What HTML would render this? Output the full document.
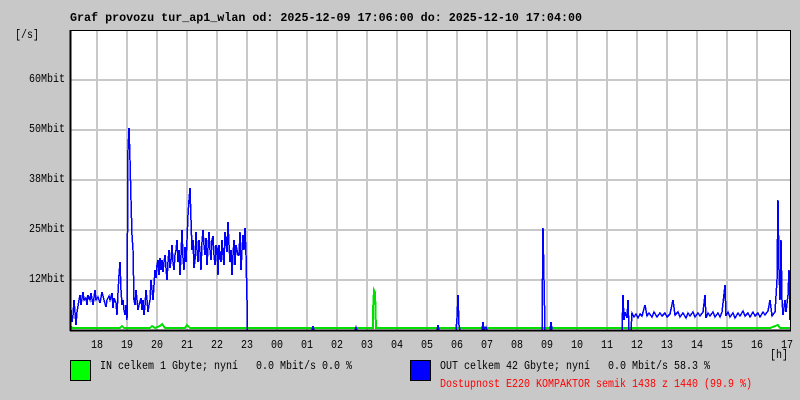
<!DOCTYPE html>
<html><head><meta charset="utf-8"><style>
html,body{margin:0;padding:0;background:#c8c8c8;}
body{width:800px;height:400px;position:relative;overflow:hidden;font-family:"Liberation Mono",monospace;font-size:10px;color:#000;}
.t{position:absolute;white-space:pre;line-height:12px;transform:scaleY(1.2);transform-origin:0 50%;}
.x{position:absolute;top:341px;width:20px;text-align:center;line-height:12px;transform:scaleY(1.2);}
</style></head><body>
<svg width="800" height="400" style="position:absolute;left:0;top:0" shape-rendering="crispEdges">
<rect x="70" y="30" width="720" height="300" fill="#fff"/>
<g stroke="#c8c8c8" stroke-width="2">
<line x1="97" y1="30" x2="97" y2="330"/><line x1="127" y1="30" x2="127" y2="330"/><line x1="157" y1="30" x2="157" y2="330"/><line x1="187" y1="30" x2="187" y2="330"/><line x1="217" y1="30" x2="217" y2="330"/><line x1="247" y1="30" x2="247" y2="330"/><line x1="277" y1="30" x2="277" y2="330"/><line x1="307" y1="30" x2="307" y2="330"/><line x1="337" y1="30" x2="337" y2="330"/><line x1="367" y1="30" x2="367" y2="330"/><line x1="397" y1="30" x2="397" y2="330"/><line x1="427" y1="30" x2="427" y2="330"/><line x1="457" y1="30" x2="457" y2="330"/><line x1="487" y1="30" x2="487" y2="330"/><line x1="517" y1="30" x2="517" y2="330"/><line x1="547" y1="30" x2="547" y2="330"/><line x1="577" y1="30" x2="577" y2="330"/><line x1="607" y1="30" x2="607" y2="330"/><line x1="637" y1="30" x2="637" y2="330"/><line x1="667" y1="30" x2="667" y2="330"/><line x1="697" y1="30" x2="697" y2="330"/><line x1="727" y1="30" x2="727" y2="330"/><line x1="757" y1="30" x2="757" y2="330"/>
<line x1="70" y1="80" x2="790" y2="80"/><line x1="70" y1="130" x2="790" y2="130"/><line x1="70" y1="180" x2="790" y2="180"/><line x1="70" y1="230" x2="790" y2="230"/><line x1="70" y1="280" x2="790" y2="280"/>
</g>
<polyline fill="none" stroke="#00e000" stroke-width="2" points="70,325 72,328 120,328 122,326 124,328 150,328 152,326 155,328 160,326 162,324 165,328 185,328 187,325 190,328 247,328 373,328 373,310 374,290 375,292 376,328 500,328 560,328 700,328 770,328 778,325 780,328 790,328"/>
<polyline fill="none" stroke="#0000ff" stroke-width="1.5" points="70,318 71,310 72,322 73,315 74,300 76,325 77,312 79,300 80,295 81,305 83,292 84,300 86,298 87,305 88,295 90,300 91,293 93,305 95,290 96,300 98,297 100,303 102,292 104,300 106,307 107,300 109,296 110,300 112,293 113,308 114,298 116,303 117,315 118,293 119,275 120,262 121,290 122,305 123,300 124,310 125,315 126,305 127,320 128,150 129,128 130,160 131,200 132,235 133,250 134,300 135,305 136,290 137,300 138,310 139,305 141,298 142,310 143,300 144,315 145,305 146,290 147,300 148,312 149,305 150,300 151,280 152,290 153,300 154,285 155,270 156,278 157,265 158,260 159,275 160,258 161,270 162,260 163,272 164,262 165,255 166,268 167,280 168,262 169,250 170,268 171,260 172,245 173,262 174,270 175,255 176,250 177,240 178,262 179,250 180,275 181,255 182,230 183,258 184,270 185,247 186,262 187,240 188,215 189,200 190,188 191,220 192,250 193,240 194,268 195,260 196,232 197,250 198,262 199,240 200,252 201,270 202,242 203,230 204,245 205,255 206,238 207,265 208,248 209,232 210,250 211,260 212,240 213,236 214,255 215,265 216,245 217,248 218,275 219,245 220,258 221,262 222,240 223,255 224,265 225,232 226,240 227,252 228,222 229,245 230,262 231,250 232,275 233,255 234,240 235,265 236,245 237,250 238,255 239,255 240,232 241,270 242,250 243,235 244,250 245,228 246,255 247,300 247,330 312,330 313,326 314,330 355,330 356,327 357,330 437,330 438,325 439,330 456,330 457,318 458,295 459,325 460,330 482,330 483,322 484,330 486,327 487,330 542,330 543,228 544,280 545,330 550,330 551,322 552,330 622,330 623,295 624,320 625,312 627,318 628,300 629,330 631,330 632,313 634,317 636,314 638,318 640,314 642,316 645,305 647,316 649,313 652,317 654,312 657,317 660,313 662,316 665,313 667,317 670,314 673,300 675,315 678,312 680,317 683,313 686,318 688,313 690,316 693,312 695,317 698,313 700,316 703,312 705,295 706,318 708,313 710,316 713,312 715,317 718,313 720,317 722,312 725,285 726,316 728,312 730,317 733,313 735,318 738,313 740,316 743,311 745,316 748,313 750,317 753,312 755,316 758,313 760,317 763,312 765,315 768,311 770,300 772,316 775,312 777,280 778,200 779,270 780,300 781,240 782,300 783,315 785,300 786,312 788,295 789,270 790,320"/>
<rect x="70.5" y="30.5" width="720" height="300" fill="none" stroke="#000" stroke-width="1"/>
<line x1="70.5" y1="30" x2="70.5" y2="331" stroke="#000" stroke-width="2"/>
<line x1="70" y1="330.5" x2="791" y2="330.5" stroke="#000" stroke-width="2"/>
<rect x="70.5" y="360.5" width="20" height="20" fill="#00ff00" stroke="#000"/>
<rect x="410.5" y="360.5" width="20" height="20" fill="#0000ff" stroke="#000"/>
</svg>
<div class="t" style="left:70px;top:12px;font-weight:bold;font-size:11.7px;transform:none">Graf provozu tur_ap1_wlan od: 2025-12-09 17:06:00 do: 2025-12-10 17:04:00</div>
<div class="t" style="left:15px;top:31px">[/s]</div>
<div class="t" style="left:0;width:65px;text-align:right;top:75px">60Mbit</div>
<div class="t" style="left:0;width:65px;text-align:right;top:125px">50Mbit</div>
<div class="t" style="left:0;width:65px;text-align:right;top:175px">38Mbit</div>
<div class="t" style="left:0;width:65px;text-align:right;top:225px">25Mbit</div>
<div class="t" style="left:0;width:65px;text-align:right;top:275px">12Mbit</div>
<div class="x" style="left:87px">18</div><div class="x" style="left:117px">19</div><div class="x" style="left:147px">20</div><div class="x" style="left:177px">21</div><div class="x" style="left:207px">22</div><div class="x" style="left:237px">23</div><div class="x" style="left:267px">00</div><div class="x" style="left:297px">01</div><div class="x" style="left:327px">02</div><div class="x" style="left:357px">03</div><div class="x" style="left:387px">04</div><div class="x" style="left:417px">05</div><div class="x" style="left:447px">06</div><div class="x" style="left:477px">07</div><div class="x" style="left:507px">08</div><div class="x" style="left:537px">09</div><div class="x" style="left:567px">10</div><div class="x" style="left:597px">11</div><div class="x" style="left:627px">12</div><div class="x" style="left:657px">13</div><div class="x" style="left:687px">14</div><div class="x" style="left:717px">15</div><div class="x" style="left:747px">16</div><div class="x" style="left:777px">17</div>
<div class="t" style="left:770px;top:351px">[h]</div>
<div class="t" style="left:100px;top:362px">IN celkem 1 Gbyte; nyní   0.0 Mbit/s 0.0 %</div>
<div class="t" style="left:440px;top:362px">OUT celkem 42 Gbyte; nyní   0.0 Mbit/s 58.3 %</div>
<div class="t" style="left:440px;top:380px;color:#ff0000">Dostupnost E220 KOMPAKTOR semik 1438 z 1440 (99.9 %)</div>
</body></html>
